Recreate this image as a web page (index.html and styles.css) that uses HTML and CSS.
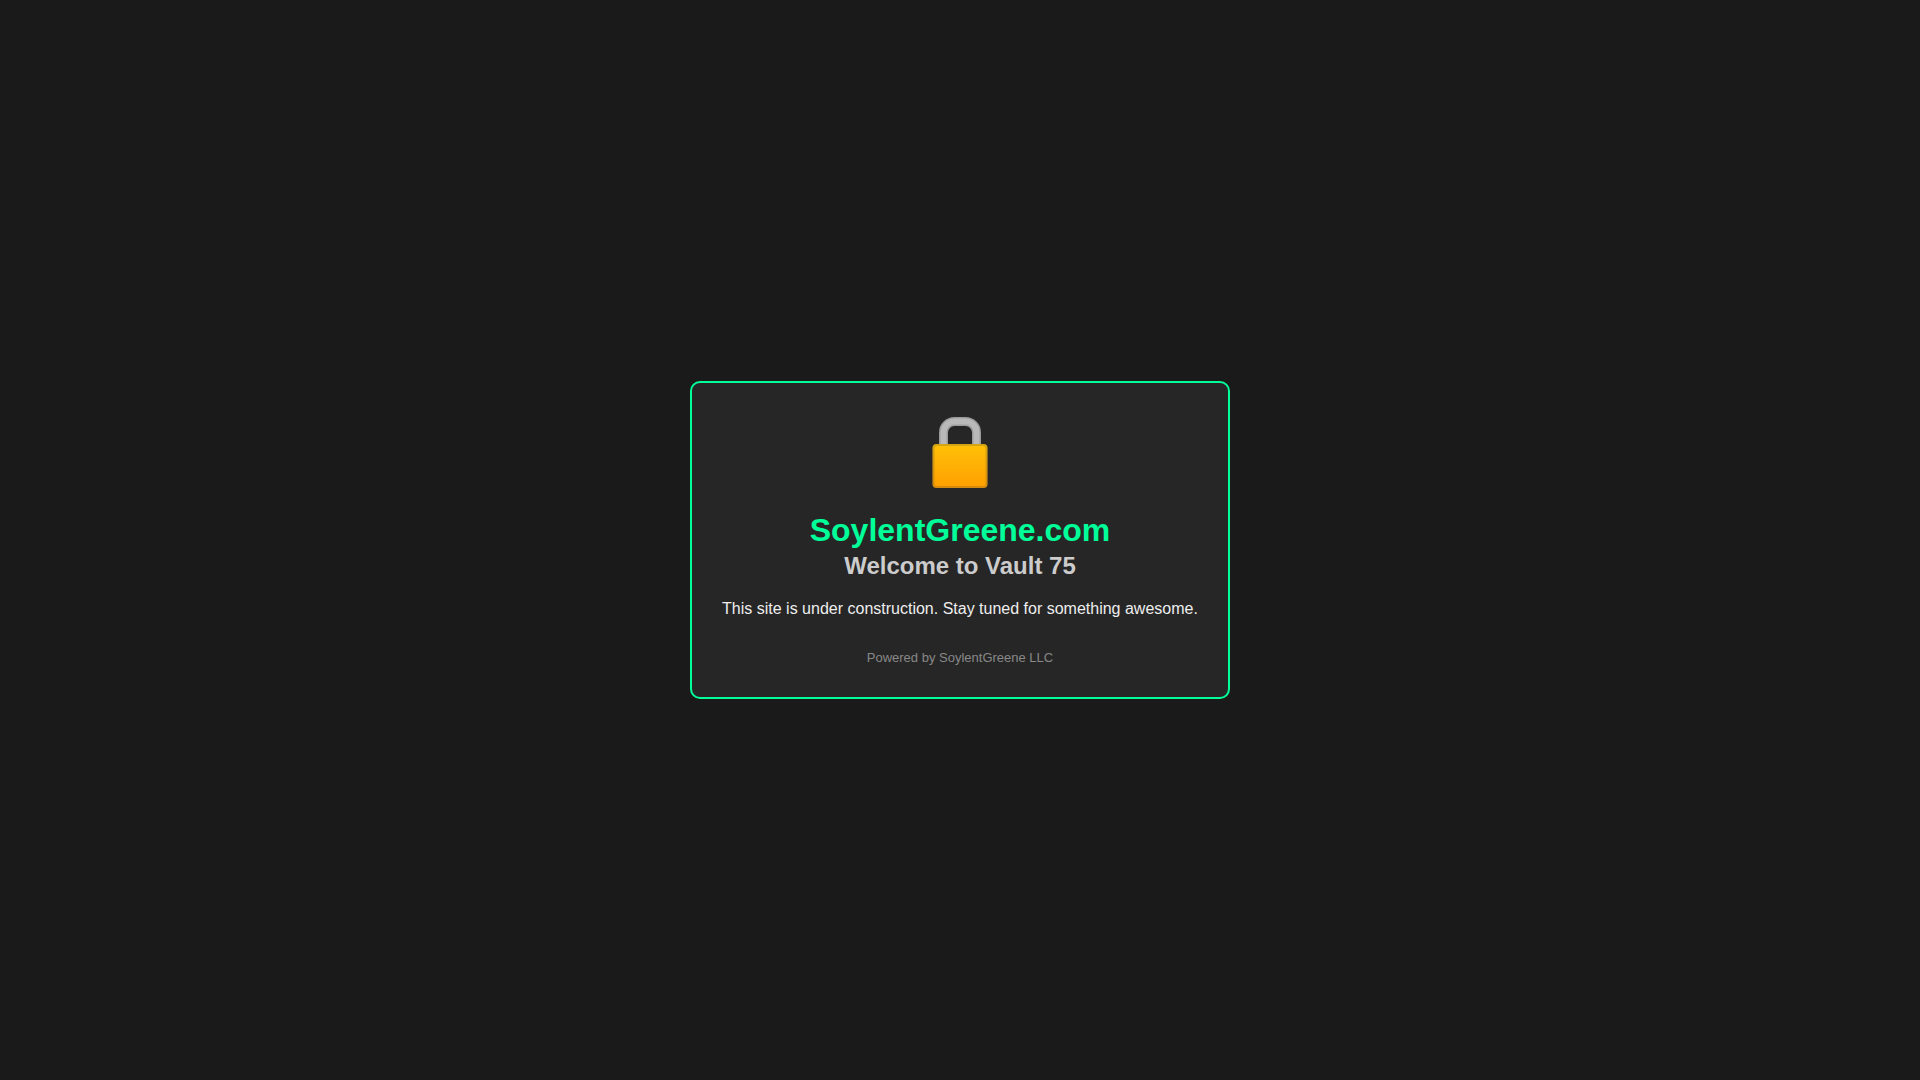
FILE: index.html
```html
<!DOCTYPE html>
<html lang="en">
<head>
<meta charset="UTF-8">
<meta name="viewport" content="width=device-width, initial-scale=1">
<title>SoylentGreene.com</title>
<link rel="stylesheet" href="styles.css">
</head>
<body>
<main class="card">
  <svg class="lock" viewBox="0 0 80 80" role="img" aria-label="Locked">
    <defs>
      <linearGradient id="gold" x1="0" y1="0" x2="0" y2="1">
        <stop offset="0" stop-color="#ffc107"/>
        <stop offset="1" stop-color="#ff9f00"/>
      </linearGradient>
    </defs>
    <path d="M23.500 30V17.500A11 11 0 0 1 34.500 6.500H45.500A11 11 0 0 1 56.500 17.500V30" fill="none" stroke="#9b9b9b" stroke-width="9"/>
    <path d="M23.500 30V17.500A11 11 0 0 1 34.500 6.500H45.500A11 11 0 0 1 56.500 17.500V30" fill="none" stroke="#b9b9b9" stroke-width="6"/>
    <rect x="12.500" y="29" width="55" height="44" rx="4" fill="url(#gold)"/>
    <rect x="13.500" y="30" width="53" height="42" rx="3" fill="none" stroke="#424242" stroke-opacity=".22" stroke-width="2"/>
  </svg>
  <h1 class="title">SoylentGreene.com</h1>
  <h2 class="subtitle">Welcome to Vault 75</h2>
  <p class="message">This site is under construction. Stay tuned for something awesome.</p>
  <footer class="footer">Powered by SoylentGreene LLC</footer>
</main>
</body>
</html>
```
FILE: styles.css
```css
* {
  box-sizing: border-box;
}

body {
  margin: 0;
  min-height: 100vh;
  display: flex;
  align-items: center;
  justify-content: center;
  background: #1a1a1a;
  color: #eee;
  font-family: "Liberation Sans", Arial, sans-serif;
  font-size: 16px;
}

.card {
  display: flex;
  flex-direction: column;
  align-items: center;
  padding: 32px 30px;
  border: 2px solid #00ff99;
  border-radius: 10px;
  background: #262626;
  text-align: center;
}

.lock {
  width: 80px;
  height: 80px;
  margin-bottom: 16px;
}

.title,
.subtitle,
.message {
  margin: 0;
}

.title {
  color: #00ff99;
  font-size: 32px;
  line-height: 38px;
}

.subtitle {
  margin-bottom: 16px;
  color: #ccc;
  font-size: 24px;
  line-height: 34px;
}

.message {
  margin-bottom: 32px;
  line-height: 20px;
}

.footer {
  color: #888;
  font-size: 13px;
  line-height: 14px;
}
```
